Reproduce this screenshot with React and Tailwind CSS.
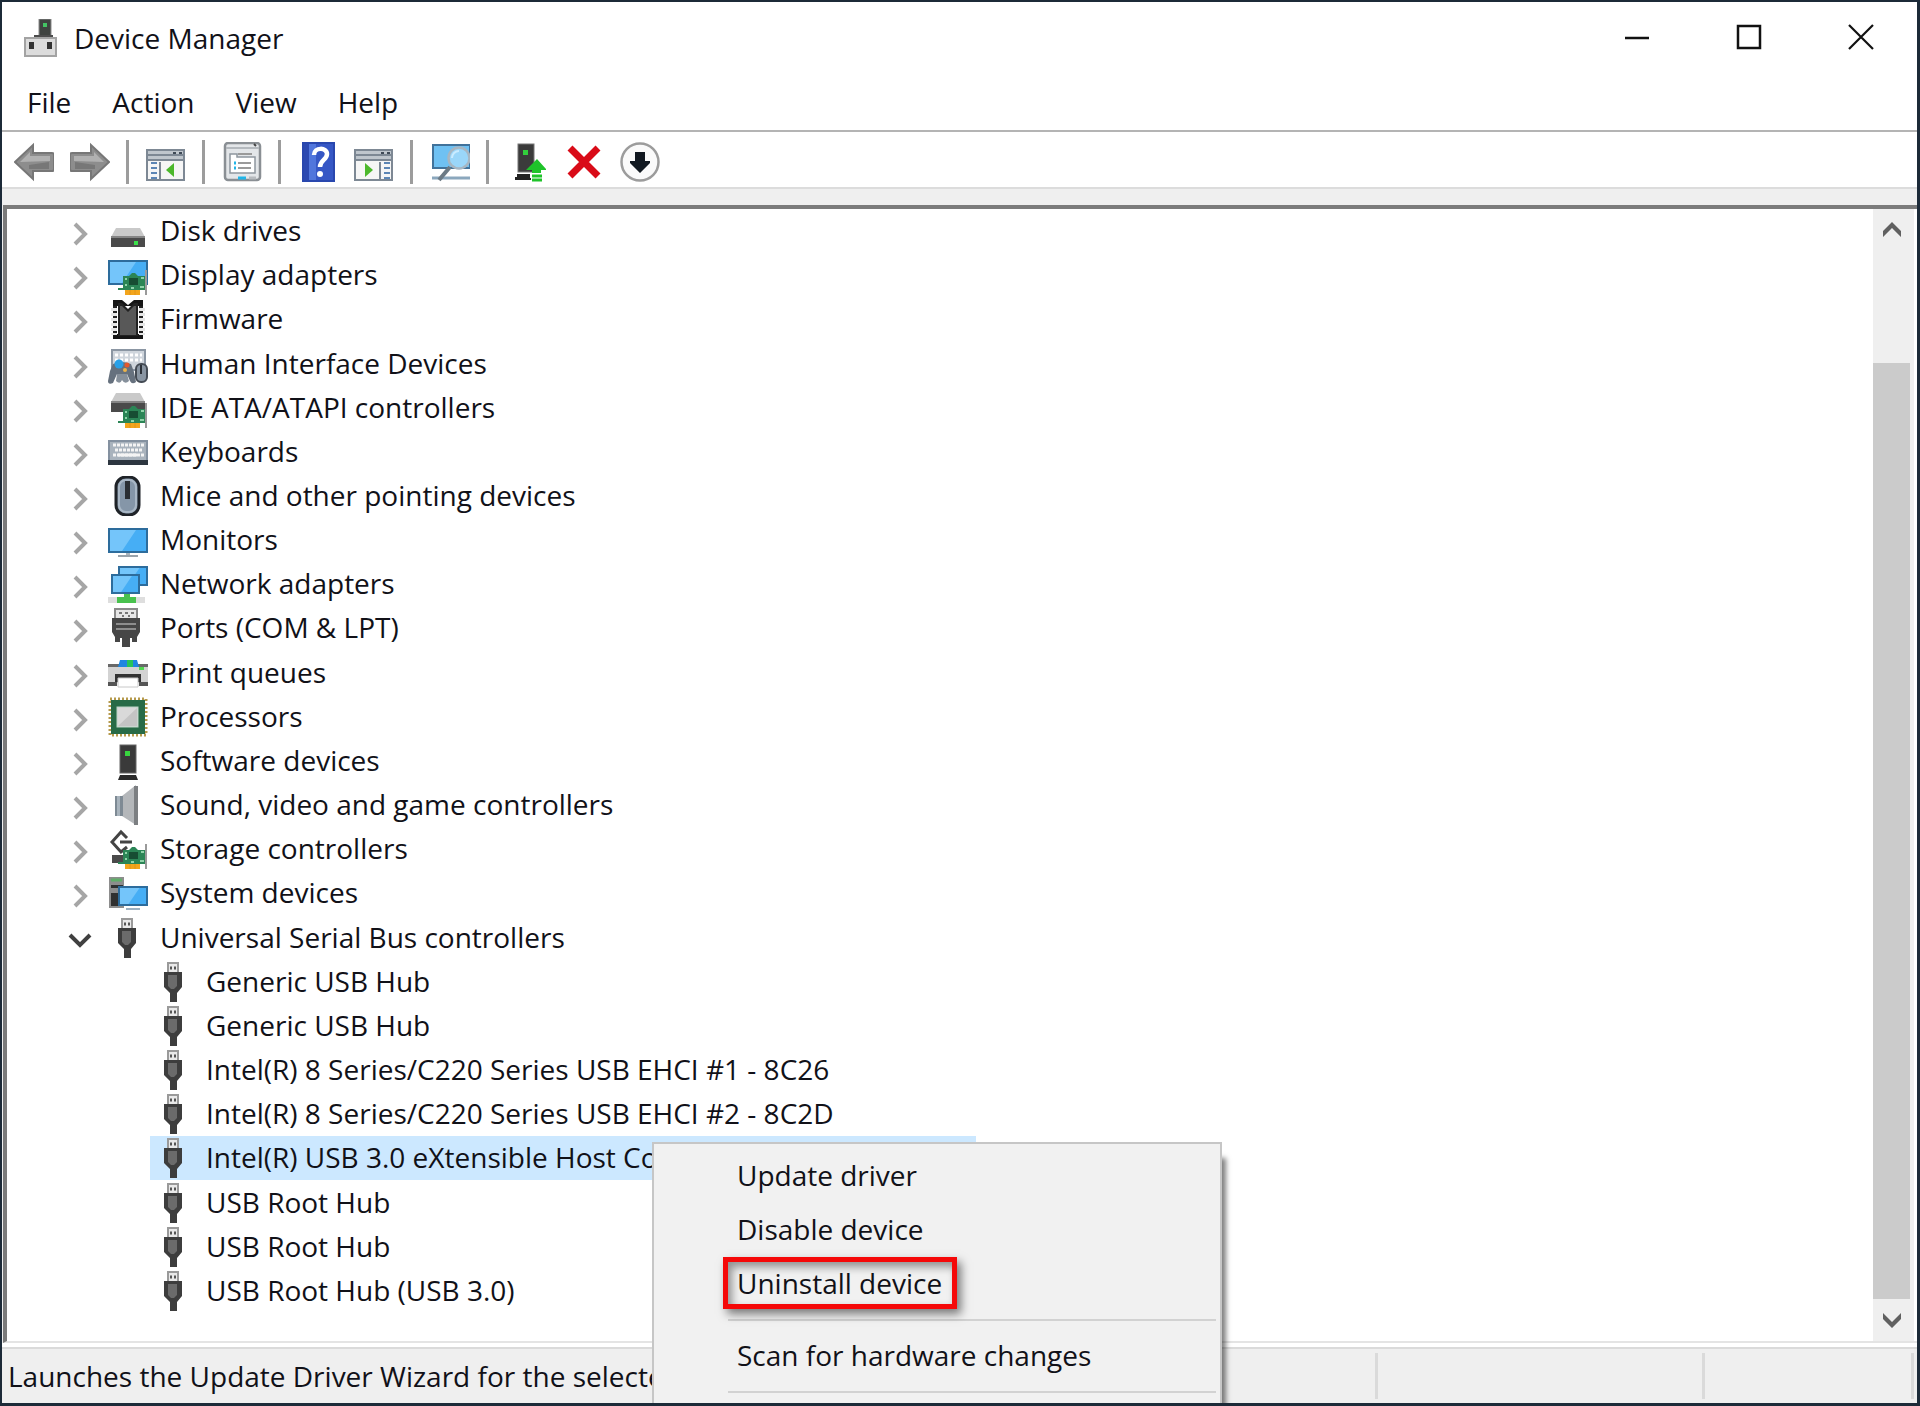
import { useState } from "react";

const categories = [
  { label: "Disk drives", icon: DiskIcon },
  { label: "Display adapters", icon: DisplayIcon },
  { label: "Firmware", icon: FirmwareIcon },
  { label: "Human Interface Devices", icon: HidIcon },
  { label: "IDE ATA/ATAPI controllers", icon: IdeIcon },
  { label: "Keyboards", icon: KeyboardIcon },
  { label: "Mice and other pointing devices", icon: MouseIcon },
  { label: "Monitors", icon: MonitorIcon },
  { label: "Network adapters", icon: NetworkIcon },
  { label: "Ports (COM & LPT)", icon: PortIcon },
  { label: "Print queues", icon: PrinterIcon },
  { label: "Processors", icon: ProcessorIcon },
  { label: "Software devices", icon: SoftwareIcon },
  { label: "Sound, video and game controllers", icon: SoundIcon },
  { label: "Storage controllers", icon: StorageIcon },
  { label: "System devices", icon: SystemIcon },
];

const usbDevices = [
  "Generic USB Hub",
  "Generic USB Hub",
  "Intel(R) 8 Series/C220 Series USB EHCI #1 - 8C26",
  "Intel(R) 8 Series/C220 Series USB EHCI #2 - 8C2D",
  "Intel(R) USB 3.0 eXtensible Host Controller - 1.0",
  "USB Root Hub",
  "USB Root Hub",
  "USB Root Hub (USB 3.0)",
];

function App() {
  const [selected, setSelected] = useState(4);

  return (
    <div className="relative flex min-h-screen flex-col overflow-hidden border-2 border-b-3 border-r-3 border-[#1c2a38] bg-white font-['Open_Sans','Noto_Sans',sans-serif] text-[28px] leading-9 text-[#111118]">
      <TitleBar />
      <MenuBar />
      <Toolbar />

      <main className="flex grow flex-col bg-[#efefef] pl-px pt-4">
        <div className="flex grow border-4 border-b-2 border-r-0 border-[#7b7b7b] border-b-[#e4e4e4] bg-white">
          <ul role="tree" aria-label="Devices" className="flex grow flex-col pb-7 pl-[61px]">
            {categories.map((item) => (
              <Category key={item.label} label={item.label} Icon={item.icon} />
            ))}
            <Category label="Universal Serial Bus controllers" Icon={UsbIcon} open />
            {usbDevices.map((label, i) => (
              <li
                key={i}
                role="treeitem"
                aria-level="2"
                aria-selected={i === selected}
                onClick={() => setSelected(i)}
                className="relative flex min-h-9 grow basis-0 pl-[82px]"
              >
                <span
                  className={`flex items-center gap-3 whitespace-nowrap pl-1 ${
                    i === selected ? "w-[826px] bg-[#cce8ff]" : ""
                  }`}
                >
                  <UsbIcon />
                  <span className="pb-0.5">{label}</span>
                </span>
                {i === selected && <ContextMenu />}
              </li>
            ))}
          </ul>
          <ScrollBar />
        </div>
      </main>

      <footer className="mt-1 flex h-14 border-t-2 border-[#dadada] bg-[#efefef] py-1">
        <p className="flex grow items-center pl-1.5">
          Launches the Update Driver Wizard for the selected device.
        </p>
        <div className="w-[327px] border-l-3 border-[#dadada]" />
        <div className="w-[209px] border-l-3 border-[#dadada]" />
        <div className="w-1.5 border-l-3 border-[#dadada]" />
      </footer>
    </div>
  );
}

function TitleBar() {
  return (
    <header className="flex h-[74px] items-center pl-5">
      <Svg>
        <rect x="17" y="0" width="12" height="18" fill="#3f4340" stroke="#8c8c8c" />
        <rect x="21" y="4" width="4" height="4" fill="#43c463" />
        <path d="M12 16h19v4H12z" fill="#4c4c4c" />
        <rect x="3" y="19" width="31" height="18" fill="#dcdcdc" stroke="#a3a3a3" strokeWidth="2" />
        <rect x="7" y="23" width="5" height="7" fill="#333" />
        <rect x="25" y="23" width="5" height="7" fill="#333" />
      </Svg>
      <h1 className="ml-3 grow pb-0.5">Device Manager</h1>
      <WindowButton label="Minimize">
        <path d="M1 14h24" strokeWidth="2.5" />
      </WindowButton>
      <WindowButton label="Maximize">
        <path d="M2 2h22v22H2z" strokeWidth="2.5" />
      </WindowButton>
      <WindowButton label="Close">
        <path d="M1 1l24 24M25 1L1 25" strokeWidth="2.2" />
      </WindowButton>
    </header>
  );
}

function WindowButton({ label, children }) {
  return (
    <button type="button" aria-label={label} className="flex h-full w-28 items-center justify-center pb-1">
      <svg viewBox="0 0 26 26" className="size-[26px]" fill="none" stroke="#111">
        {children}
      </svg>
    </button>
  );
}

function MenuBar() {
  return (
    <nav className="flex h-14 gap-[41px] border-b-2 border-[#b4b4b4] pb-0.5 pl-[25px]">
      {["File", "Action", "View", "Help"].map((label) => (
        <button type="button" key={label}>
          {label}
        </button>
      ))}
    </nav>
  );
}

function Toolbar() {
  return (
    <div role="toolbar" className="flex h-[57px] items-center border-b-2 border-[#dcdcdc] pl-3 pt-1">
      <Tool label="Back">
        <Arrow />
      </Tool>
      <Tool label="Forward" className="ml-4">
        <g transform="translate(40 0) scale(-1 1)">
          <Arrow />
        </g>
      </Tool>
      <Separator />
      <Tool label="Show/Hide Console Tree">
        <Panel />
        <path d="M14 20v18" stroke="#7d8894" strokeWidth="2" />
        <path d="M5 21h6M5 26h6M5 31h6M5 36h6" stroke="#5d86b5" strokeWidth="2" />
        <path d="M28 21v14l-8-7z" fill="#4cb82c" />
      </Tool>
      <Separator />
      <Tool label="Properties">
        <rect x="3" y="1" width="35" height="37" rx="3" fill="#e3e6e9" stroke="#8a8f94" strokeWidth="2.5" />
        <path d="M4 6h33" stroke="#b4b9be" strokeWidth="2" />
        <path d="M32 2l2 2" stroke="#444" strokeWidth="2" />
        <path d="M8 12h7v3h18v16H8z" fill="#fff" stroke="#8f979f" strokeWidth="1.5" />
        <path d="M16 12h14M16 21h13M16 26h13" stroke="#9a9a9a" strokeWidth="2" />
        <path d="M12 21h2M12 26h2M16 36h8" stroke="#21b5e8" strokeWidth="3" />
        <path d="M27 36h7" stroke="#b7bbbf" strokeWidth="3" />
      </Tool>
      <Separator />
      <Tool label="Help">
        <rect x="5" y="1" width="31" height="38" fill="#3657c5" stroke="#2947ae" strokeWidth="2" />
        <path d="M6 2h12v36H6z" fill="#5176dc" />
        <path d="M6 2h5v36H6z" fill="#2c49b1" />
        <path d="M16 13c0-8 13-8 13-1 0 6-7 6-7 13" fill="none" stroke="#fff" strokeWidth="4.5" />
        <circle cx="22" cy="32" r="3" fill="#fff" />
      </Tool>
      <Tool label="Show/Hide Action Pane" className="ml-4">
        <Panel />
        <path d="M26 20v18" stroke="#7d8894" strokeWidth="2" />
        <path d="M30 21h6M30 26h6M30 31h6M30 36h6" stroke="#5d86b5" strokeWidth="2" />
        <path d="M11 21v14l8-7z" fill="#4cb82c" />
      </Tool>
      <Separator />
      <Tool label="Scan for hardware changes">
        <rect x="3" y="3" width="37" height="23" fill="#6fc1f3" stroke="#41729a" strokeWidth="2" />
        <path d="M2 36h38" stroke="#8ba7bd" strokeWidth="3" />
        <path d="M20 25L9 38" stroke="#6c7a85" strokeWidth="4" />
        <circle cx="29" cy="16" r="10.5" fill="#9ad6f9" stroke="#a7b6c2" strokeWidth="2.5" />
        <path d="M22 16a7 7 0 0 1 7-7" fill="none" stroke="#c9ebff" strokeWidth="2" />
      </Tool>
      <Separator />
      <Tool label="Update driver">
        <rect x="12" y="2" width="16" height="28" fill="#3b3b3b" stroke="#777" />
        <rect x="17" y="8" width="5" height="5" fill="#32d03c" />
        <path d="M11 32h13v4h1v2H9v-3h2z" fill="#222" />
        <path d="M20 28l11-11 10 11h-6v3h-9v-3z" fill="#1fc32a" />
        <path d="M26 34h10M26 38h10" stroke="#1fc32a" strokeWidth="3" />
      </Tool>
      <Tool label="Uninstall device" className="ml-[18px]">
        <path d="M6 6l28 28M34 6L6 34" stroke="#d90b18" strokeWidth="7" />
      </Tool>
      <Tool label="Disable device" className="ml-4">
        <circle cx="20" cy="20" r="18.5" fill="#fafafa" stroke="#9c9c9c" strokeWidth="2.5" />
        <path d="M15 10h10v9h5v2L20 31 10 21v-2h5z" fill="#111820" />
      </Tool>
    </div>
  );
}

function Tool({ label, className = "", children }) {
  return (
    <button type="button" aria-label={label} title={label} className={className}>
      <Svg>{children}</Svg>
    </button>
  );
}

function Separator() {
  return <span className="ml-4 mr-[17px] h-11 w-[3px] bg-[#9c9c9c]" />;
}

function Arrow() {
  return (
    <>
      <path d="M1 20L19 3v8h19q2 0 2 2v14q0 2-2 2H19v8z" fill="#8d8d8d" stroke="#777" strokeWidth="2" />
      <path d="M6 20l10-10v4h20v5z" fill="#b1b1b1" />
      <path d="M15 27h20v-7L15 23z" fill="#777" />
    </>
  );
}

function Panel() {
  return (
    <>
      <rect x="1" y="8" width="37" height="30" fill="#f6f6f6" stroke="#7d8894" strokeWidth="2" />
      <path d="M2 9h35v9H2z" fill="#bfc6cd" />
      <path d="M2 13h35M2 18h35" stroke="#7d8894" strokeWidth="2" />
      <path d="M27 11h3M33 11h3" stroke="#3f4a57" strokeWidth="2" />
    </>
  );
}

function Category({ label, Icon, open }) {
  return (
    <li
      role="treeitem"
      aria-level="1"
      aria-expanded={!!open}
      className="flex min-h-9 grow basis-0 items-center"
    >
      <button type="button" aria-label={`Toggle ${label}`} className="mr-4 pt-1.5">
        <svg viewBox="0 0 24 24" className="size-6" fill="none">
          {open ? (
            <path d="M2 6l10 10L22 6" stroke="#404040" strokeWidth="4" />
          ) : (
            <path d="M7 2l10 10L7 22" stroke="#a6a6a6" strokeWidth="4" />
          )}
        </svg>
      </button>
      <Icon />
      <span className="ml-3 pb-0.5">{label}</span>
    </li>
  );
}

function ContextMenu() {
  return (
    <div
      role="menu"
      className="absolute left-[584px] top-1.5 z-10 flex w-[570px] flex-col border-2 border-[#c6c6c6] bg-[#f1f1f1] pb-4 pt-[5px] shadow-[6px_14px_5px_-2px_rgba(0,0,0,0.5)]"
    >
      <MenuItem>Update driver</MenuItem>
      <MenuItem>Disable device</MenuItem>
      <div className="relative flex flex-col">
        <MenuItem>Uninstall device</MenuItem>
        <span className="pointer-events-none absolute left-[69px] top-0 h-[52px] w-[234px] border-5 border-[#f50808] shadow-[4px_5px_9px_rgba(0,0,0,0.5),inset_4px_5px_9px_rgba(0,0,0,0.4)]" />
      </div>
      <hr className="my-2 ml-[74px] mr-1 border-t-2 border-[#d2d2d2]" />
      <MenuItem>Scan for hardware changes</MenuItem>
      <hr className="my-2 ml-[74px] mr-1 border-t-2 border-[#d2d2d2]" />
    </div>
  );
}

function MenuItem({ children }) {
  return (
    <button type="button" role="menuitem" className="h-[54px] pb-0.5 pl-[83px] text-left">
      {children}
    </button>
  );
}

function ScrollBar() {
  return (
    <div className="flex w-[44px] flex-col border-r-3 border-white bg-[#efefef]">
      <button type="button" aria-label="Scroll up" className="flex h-[42px] w-[37px] items-center justify-center">
        <svg viewBox="0 0 18 18" className="size-[18px]">
          <path d="M0 10l9-9 9 9v6L9 7l-9 9z" fill="#606060" />
        </svg>
      </button>
      <span className="grow-[112] basis-0" />
      <span className="w-[37px] grow-[937] basis-0 bg-[#cbcbcb]" />
      <button type="button" aria-label="Scroll down" className="flex h-[42px] w-[37px] items-center justify-center">
        <svg viewBox="0 0 18 18" className="size-[18px]">
          <path d="M0 8l9 9 9-9V2l-9 9-9-9z" fill="#606060" />
        </svg>
      </button>
    </div>
  );
}

function Svg({ children }) {
  return (
    <svg viewBox="0 0 40 40" className="size-10 shrink-0" fill="none" aria-hidden="true">
      {children}
    </svg>
  );
}

// expansion card that overlaps several of the category icons
function Card() {
  return (
    <>
      <path d="M17 34h15v6H17z" fill="#f3a51c" />
      <path d="M22 34v6M27 34v6" stroke="#e0941a" />
      <path d="M15 21h6l3-3h3l3 3h8v14H15z" fill="#2b8556" />
      <path d="M10 34h6" stroke="#2b8556" strokeWidth="2" />
      <rect x="21" y="23" width="9" height="7" fill="#174d33" />
      <path d="M17 24h2M17 30h2M33 23h3M32 32h4M23 33h3" stroke="#8fd3a9" strokeWidth="2" />
      <path d="M38 15v25" stroke="#9a9a9a" strokeWidth="2" />
    </>
  );
}

function Drive() {
  return (
    <>
      <path d="M8 17h24l5 9H3z" fill="#c9c9c9" />
      <path d="M3 26h34v10H3z" fill="#4a4a4a" />
      <path d="M3 26h34" stroke="#858585" strokeWidth="2" />
    </>
  );
}

function Screen({ x, y, w, h }) {
  return (
    <>
      <rect x={x + 1} y={y + 1} width={w - 2} height={h - 2} fill="#46aef5" stroke="#2d6c9c" strokeWidth="2" />
      <path d={`M${x + 2} ${y + 2}h${w * 0.65}L${x + w * 0.35} ${y + h - 2}H${x + 2}z`} fill="#74c5fa" />
    </>
  );
}

function DiskIcon() {
  return (
    <Svg>
      <Drive />
      <rect x="26" y="30" width="4" height="4" fill="#3ae04a" />
    </Svg>
  );
}

function DisplayIcon() {
  return (
    <Svg>
      <Screen x={0} y={5} w={40} h={25} />
      <Card />
    </Svg>
  );
}

function FirmwareIcon() {
  return (
    <Svg>
      <path d="M5 1h9l6 5 6-5h9v6H5zM5 35h30v5H5z" fill="#151515" />
      <path d="M7 7v29M33 7v29" stroke="#222" strokeWidth="4" />
      <path d="M6 9v27M34 9v27" stroke="#e6e6e6" strokeWidth="6" strokeDasharray="3 2" />
      <path d="M10 4h4l6 6 6-6h4v33H10z" fill="#222" />
      <path d="M12 7h2l6 6 6-6h2v29H12z" fill="#585858" />
    </Svg>
  );
}

function HidIcon() {
  return (
    <Svg>
      <rect x="4" y="6" width="33" height="20" fill="#cfd5dc" stroke="#8b96a3" strokeWidth="2" />
      <path d="M7 11h27M7 16h27" stroke="#fff" strokeWidth="3" strokeDasharray="3 2" />
      <path d="M5 20q8-4 18 0l3 8 2 10q-4 3-6-1l-3-7H9l-4 9q-5 2-5-2l2-10z" fill="#66717e" />
      <path d="M9 30h10l2 7q-4 4-7-1-2 5-6 1z" fill="#86909b" />
      <circle cx="11" cy="20" r="4.5" fill="#28a0e8" />
      <circle cx="19" cy="21" r="2.5" fill="#e2582d" />
      <circle cx="17" cy="26" r="2" fill="#edb44a" />
      <rect x="28" y="20" width="11" height="18" rx="5" fill="#8995a2" stroke="#444b54" strokeWidth="2" />
      <path d="M33 21v9" stroke="#2c3138" strokeWidth="2" />
    </Svg>
  );
}

function IdeIcon() {
  return (
    <Svg>
      <g transform="translate(0 -12)">
        <Drive />
      </g>
      <Card />
    </Svg>
  );
}

function KeyboardIcon() {
  return (
    <Svg>
      <rect x="1" y="9" width="38" height="23" fill="#a9b3bd" stroke="#8491a0" strokeWidth="2" />
      <path d="M5 13h31M7 18h27M5 23h31" stroke="#f4f4f4" strokeWidth="3" strokeDasharray="3 1" />
      <path d="M10 23h19" stroke="#f4f4f4" strokeWidth="3" />
      <path d="M0 28h40v5H0z" fill="#2d3640" />
    </Svg>
  );
}

function MouseIcon() {
  return (
    <Svg>
      <rect x="8" y="1" width="23" height="38" rx="10" fill="#8596a8" stroke="#1f2328" strokeWidth="3" />
      <rect x="11" y="4" width="17" height="32" rx="7" stroke="#a9b7c5" strokeWidth="2" />
      <rect x="17" y="5" width="5" height="18" fill="#2a2e33" />
    </Svg>
  );
}

function MonitorIcon() {
  return (
    <Svg>
      <Screen x={0} y={8} w={40} h={25} />
      <path d="M18 33h4v2h-4z" fill="#aab4bd" />
      <path d="M10 36h20" stroke="#9aa3ab" strokeWidth="2" />
    </Svg>
  );
}

function NetworkIcon() {
  return (
    <Svg>
      <Screen x={10} y={2} w={30} h={20} />
      <Screen x={3} y={10} w={29} h={20} />
      <path d="M0 33h37v6H0z" fill="#dedede" />
      <path d="M9 33h7v-3h6v3h6v6H9z" fill="#49c24e" />
    </Svg>
  );
}

function PortIcon() {
  return (
    <Svg>
      <path d="M7 1h22v10H7z" fill="#e6e6e6" stroke="#8a8a8a" strokeWidth="2" />
      <path d="M11 5h3M17 5h3M23 5h3M14 8h2M20 8h2" stroke="#777" strokeWidth="2" />
      <path d="M4 10h28v14l-3 5v5h-5v-4h-2v9h-8v-9h-2v4H7v-5l-3-5z" fill="#464646" />
      <path d="M8 16h20M8 21h20" stroke="#8d8d8d" strokeWidth="2" />
    </Svg>
  );
}

function PrinterIcon() {
  return (
    <Svg>
      <path d="M0 11h40v4H0z" fill="#686868" />
      <path d="M0 14h40v16H0z" fill="#d3d3d3" />
      <path d="M0 29h9v4H0zM31 29h9v4h-9z" fill="#555" />
      <path d="M12 7h17l2 7H10z" fill="#1e86e0" />
      <path d="M19 7h6v7h-6z" fill="#27c45a" />
      <path d="M31 14h5v3h-5z" fill="#4fd64f" />
      <path d="M7 21h26v8H7z" fill="#333" />
      <path d="M10 25h20v9H10z" fill="#fff" stroke="#c8c8c8" />
    </Svg>
  );
}

function ProcessorIcon() {
  return (
    <Svg>
      <rect x="2" y="2" width="36" height="36" stroke="#b69a4c" strokeWidth="3" strokeDasharray="2 2" />
      <rect x="3" y="3" width="34" height="34" fill="#286b47" />
      <rect x="9" y="10" width="21" height="20" fill="#d9d9d9" stroke="#bcd3c6" />
      <path d="M10 29L29 11v18z" fill="#c4c4c4" />
    </Svg>
  );
}

function SoftwareIcon() {
  return (
    <Svg>
      <rect x="12" y="4" width="16" height="28" fill="#3a3a3a" stroke="#666" />
      <rect x="17" y="10" width="5" height="5" fill="#38d63f" />
      <path d="M12 34h16l2 5H10z" fill="#2a2a2a" />
    </Svg>
  );
}

function SoundIcon() {
  return (
    <Svg>
      <path d="M14 11L28 0v40L14 31z" fill="#b4b7ba" />
      <path d="M7 11h8v20H7z" fill="#7e8a94" />
      <path d="M9 11h3v20H9z" fill="#a9b4bd" />
      <path d="M26 1h4v39h-4z" fill="#7c7f82" />
    </Svg>
  );
}

function StorageIcon() {
  return (
    <Svg>
      <path d="M19 9l-6-6L4 13l9 10 6-5M12 13h12" stroke="#444" strokeWidth="3" />
      <path d="M4 26h13v8H4z" fill="#4a4a4a" />
      <Card />
    </Svg>
  );
}

function SystemIcon() {
  return (
    <Svg>
      <path d="M1 4h15v31H1z" fill="#8d8d8d" />
      <path d="M3 12h12v3H3zM3 20h8v13H3z" fill="#303030" />
      <path d="M3 7h11" stroke="#5fae68" strokeWidth="3" />
      <Screen x={10} y={13} w={30} h={20} />
      <path d="M18 36h14" stroke="#9db1c2" strokeWidth="2" />
    </Svg>
  );
}

function UsbIcon() {
  return (
    <Svg>
      <path d="M14 1h10v10H14z" fill="#e9e9e9" stroke="#9a9a9a" strokeWidth="2" />
      <path d="M16 6h2M20 6h2" stroke="#555" strokeWidth="3" />
      <path d="M10 10h18v15l-5 6v9h-7v-9l-6-6z" fill="#3d3d3d" />
      <path d="M14 13h9v11l-3 3h-3l-3-3z" fill="#6b6b6b" />
    </Svg>
  );
}

export default App;
